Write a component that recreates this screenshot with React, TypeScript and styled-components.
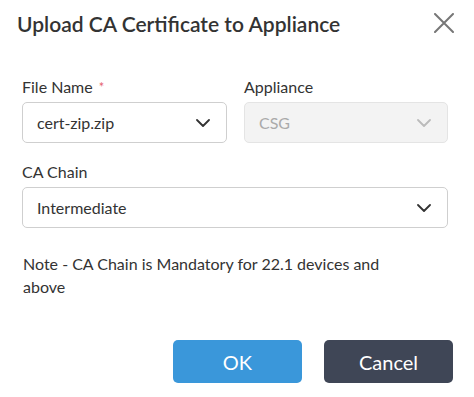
import React from 'react'
import styled, { createGlobalStyle } from 'styled-components'

const GlobalStyle = createGlobalStyle`
  html, body {
    margin: 0;
    padding: 0;
    background: #fff;
  }
  body {
    font-family: Lato, 'Open Sans', Arial, sans-serif;
    color: #333;
  }
`

const Dialog = styled.div`
  width: 474px;
  height: 397px;
  box-sizing: border-box;
  display: flex;
  flex-direction: column;
`

const Header = styled.div`
  display: flex;
  align-items: center;
  justify-content: space-between;
  padding: 8px 20px 0 17px;
  height: 30px;
`

const Title = styled.h2`
  margin: 0;
  font-size: 21px;
  font-weight: 600;
  color: #333;
`

const CloseButton = styled.button`
  border: 0;
  background: none;
  padding: 0;
  width: 20px;
  height: 22px;
  display: flex;
  align-items: center;
  justify-content: center;
  cursor: pointer;
`

const Body = styled.div`
  padding: 39px 26px 0 22px;
  display: flex;
  flex-direction: column;
`

const Row = styled.div`
  display: grid;
  grid-template-columns: 205px 204px;
  column-gap: 17px;
`

const Field = styled.div<{ $top?: number }>`
  display: flex;
  flex-direction: column;
  margin-top: ${(p) => p.$top ?? 0}px;
`

const Label = styled.label`
  font-size: 16px;
  line-height: 20px;
  color: #333;
  height: 20px;
  margin-bottom: 5px;
`

const Required = styled.span`
  color: #e5646e;
  font-size: 13px;
  margin-left: 6px;
  vertical-align: top;
`

const Select = styled.div<{ $disabled?: boolean }>`
  box-sizing: border-box;
  height: 41px;
  border: 1px solid ${(p) => (p.$disabled ? '#e4e4e4' : '#cfcfcf')};
  border-radius: 5px;
  background: ${(p) => (p.$disabled ? '#f3f3f3' : '#fff')};
  display: flex;
  align-items: center;
  justify-content: space-between;
  padding: 0 16px 0 14px;
  font-size: 16px;
  color: ${(p) => (p.$disabled ? '#aaa' : '#333')};
`

const Note = styled.p`
  margin: 24px 0 0 1px;
  font-size: 16px;
  line-height: 23px;
  color: #333;
  max-width: 380px;
`

const Footer = styled.div`
  margin-top: auto;
  display: flex;
  justify-content: flex-end;
  gap: 22px;
  padding: 0 21px 14px 0;
`

const Button = styled.button<{ $variant: 'primary' | 'dark' }>`
  width: 129px;
  height: 43px;
  border: 0;
  border-radius: 5px;
  font-family: Lato, 'Open Sans', Arial, sans-serif;
  font-size: 20px;
  color: #fff;
  background: ${(p) => (p.$variant === 'primary' ? '#3a97da' : '#3f4656')};
  cursor: pointer;
`

const Chevron = ({ color }: { color: string }) => (
  <svg width='14' height='8' viewBox='0 0 14 8' fill='none'>
    <path d='M1 1l6 6 6-6' stroke={color} strokeWidth='1.8' strokeLinecap='round' strokeLinejoin='round' />
  </svg>
)

const CloseIcon = () => (
  <svg width='20' height='20' viewBox='0 0 20 20' fill='none'>
    <path d='M1 1l18 18M19 1L1 19' stroke='#777' strokeWidth='2' strokeLinecap='round' />
  </svg>
)

export default function App() {
  return (
    <>
      <GlobalStyle />
      <Dialog>
        <Header>
          <Title>Upload CA Certificate to Appliance</Title>
          <CloseButton aria-label='Close'>
            <CloseIcon />
          </CloseButton>
        </Header>
        <Body>
          <Row>
            <Field>
              <Label>
                File Name<Required>*</Required>
              </Label>
              <Select>
                cert-zip.zip
                <Chevron color='#333' />
              </Select>
            </Field>
            <Field>
              <Label>Appliance</Label>
              <Select $disabled>
                CSG
                <Chevron color='#bbb' />
              </Select>
            </Field>
          </Row>
          <Field $top={19}>
            <Label>CA Chain</Label>
            <Select>
              Intermediate
              <Chevron color='#333' />
            </Select>
          </Field>
          <Note>Note - CA Chain is Mandatory for 22.1 devices and above</Note>
        </Body>
        <Footer>
          <Button $variant='primary'>OK</Button>
          <Button $variant='dark'>Cancel</Button>
        </Footer>
      </Dialog>
    </>
  )
}
